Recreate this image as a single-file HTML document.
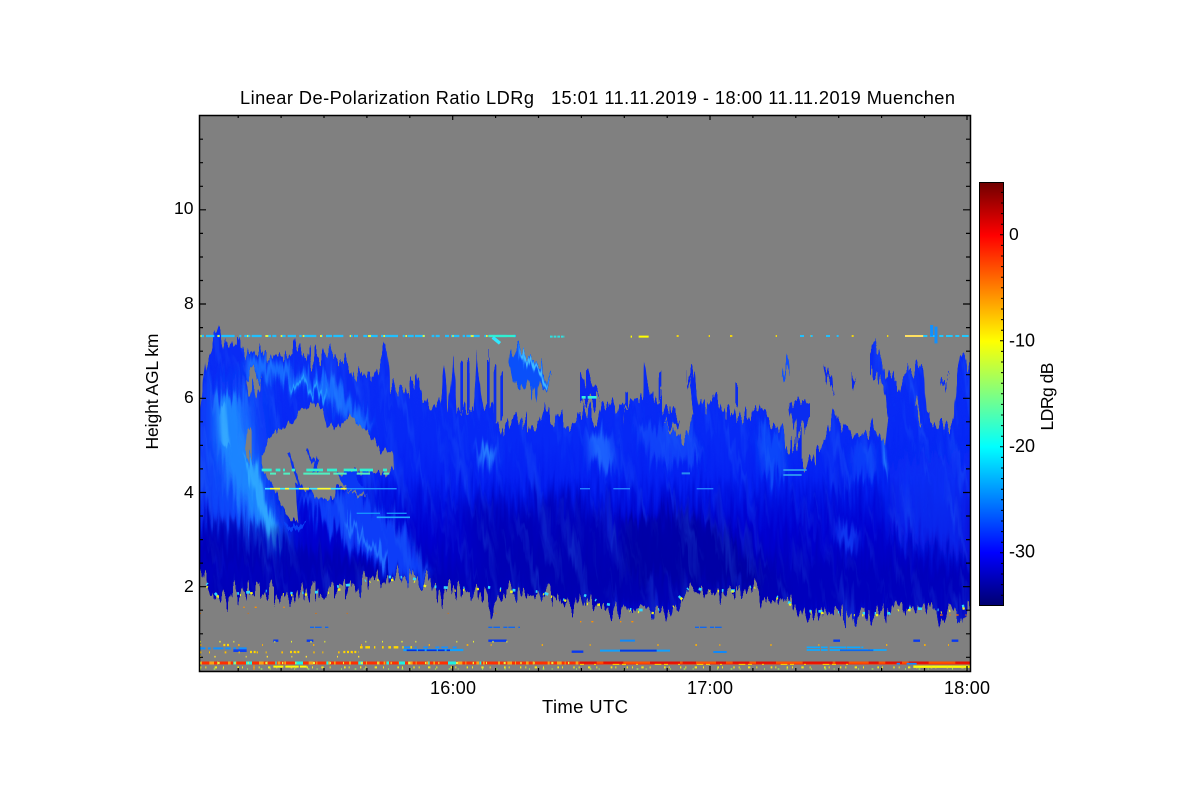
<!DOCTYPE html>
<html><head><meta charset="utf-8"><style>
html,body{margin:0;padding:0;background:#fff}
svg{display:block}
text{font-family:"Liberation Sans",sans-serif;font-size:17.5px;fill:#000}
</style></head><body>
<svg width="1200" height="800" viewBox="0 0 1200 800" xmlns="http://www.w3.org/2000/svg">
<defs>
<linearGradient id="cb" x1="0" y1="0" x2="0" y2="1">
<stop offset="0" stop-color="#700000"/><stop offset=".125" stop-color="#ff0000"/><stop offset=".25" stop-color="#ff8000"/><stop offset=".375" stop-color="#ffff00"/><stop offset=".5" stop-color="#80ff80"/><stop offset=".625" stop-color="#00ffff"/><stop offset=".75" stop-color="#0080ff"/><stop offset=".875" stop-color="#0000ff"/><stop offset="1" stop-color="#000070"/>
</linearGradient>
<linearGradient id="bg" gradientUnits="userSpaceOnUse" x1="0" y1="0" x2="0" y2="900">
<stop offset="0" stop-color="#0a2cf5"/><stop offset=".4" stop-color="#0628f5"/><stop offset=".52" stop-color="#0420f2"/><stop offset=".6" stop-color="#0010e0"/><stop offset=".7" stop-color="#0000d0"/><stop offset=".85" stop-color="#0000bc"/><stop offset=".93" stop-color="#0000b8"/><stop offset="1" stop-color="#0008d0"/>
</linearGradient>
<filter id="b1" x="-30%" y="-30%" width="160%" height="160%"><feGaussianBlur stdDeviation="12"/></filter>
<filter id="b2" x="-30%" y="-30%" width="160%" height="160%"><feGaussianBlur stdDeviation="30"/></filter>
<filter id="b3" x="-30%" y="-30%" width="160%" height="160%"><feGaussianBlur stdDeviation="4"/></filter>
<filter id="n" x="0" y="0" width="100%" height="100%"><feTurbulence type="fractalNoise" baseFrequency=".09 .012" numOctaves="3" seed="7"/><feColorMatrix type="matrix" values="0 0 0 0 0.05  0 0 0 0 0.38  0 0 0 0 1  2.6 0 0 0 -1.3"/></filter>
<filter id="jag" filterUnits="userSpaceOnUse" x="199" y="300" width="772" height="340" color-interpolation-filters="sRGB">
<feTurbulence type="fractalNoise" baseFrequency=".27 .025" numOctaves="2" seed="11"/>
<feColorMatrix type="matrix" values="1 0 0 0 0  0 0 0 0 .5  0 0 0 0 .5  0 0 0 0 1" result="t"/>
<feDisplacementMap in="SourceGraphic" in2="t" scale="44" xChannelSelector="G" yChannelSelector="R"/>
</filter>
<filter id="jag2" filterUnits="userSpaceOnUse" x="199" y="300" width="772" height="340" color-interpolation-filters="sRGB">
<feTurbulence type="fractalNoise" baseFrequency=".3 .03" numOctaves="2" seed="4"/>
<feColorMatrix type="matrix" values="1 0 0 0 0  0 0 0 0 .5  0 0 0 0 .5  0 0 0 0 1" result="t"/>
<feDisplacementMap in="SourceGraphic" in2="t" scale="16" xChannelSelector="G" yChannelSelector="R"/>
</filter>
<clipPath id="cl"><path transform="translate(190 320) scale(.33333)" d="M30 260 40 170 45 110 50 170 60 110 70 70 90 30 100 70 120 55 150 60 170 100 205 95 240 110 265 100 300 110 330 75 350 120 380 110 405 95 440 110 470 130 490 160 510 130 530 190 550 180 590 60 600 190 640 205 680 195 700 230 720 275 750 260 762 140 772 260 790 110 800 270 850 280 860 110 880 270 905 250 925 320 940 340 960 310 1000 310 1030 300 1060 260 1080 300 1110 290 1140 310 1170 265 1190 270 1220 300 1235 250 1270 255 1310 260 1300 300 1330 240 1360 220 1362 130 1372 200 1410 260 1440 250 1470 290 1465 310 1420 320 1460 340 1490 360 1510 300 1500 200 1515 140 1525 260 1550 250 1575 230 1600 290 1630 250 1640 300 1680 300 1700 270 1740 310 1770 310 1790 380 1820 360 1835 350 1835 430 1870 410 1910 350 1930 285 1960 310 1980 350 2020 340 2050 310 2085 380 2095 290 2080 180 2040 150 2040 100 2070 100 2085 150 2130 190 2140 150 2170 150 2200 140 2210 280 2260 320 2290 310 2300 180 2310 100 2340 130 2340 868 2310 880 2250 882 2220 862 2180 872 2130 870 2115 840 2100 890 2060 880 2000 892 1960 880 1920 882 1850 880 1820 860 1790 835 1770 842 1720 850 1700 800 1640 820 1540 815 1500 790 1470 850 1460 875 1450 860 1440 905 1420 870 1400 890 1370 870 1330 880 1280 880 1240 860 1200 850 1170 830 1160 858 1140 862 1095 830 1050 830 1030 815 1000 825 960 820 930 830 905 865 880 820 800 815 745 832 730 830 710 790 660 770 550 770 510 810 440 810 410 835 385 820 350 815 310 835 275 830 215 820 170 815 130 825 85 830 70 840 50 780 30 745Z"/></clipPath>
</defs>
<rect width="1200" height="800" fill="#fff"/>
<rect x="199" y="115" width="771" height="556" fill="#808080"/>
<g filter="url(#jag)">
<g clip-path="url(#cl)">
<g transform="translate(190 320) scale(.33333)">
<rect x="0" y="0" width="2340" height="900" fill="url(#bg)"/>
<path d="M30 200 210 180 250 480 300 700 30 590Z" fill="#0a46fa" filter="url(#b2)"/>
<path d="M70 230 170 230 200 420 280 680 180 600 100 480 70 350Z" fill="#1a70ff" opacity=".85" filter="url(#b1)"/>
<path d="M80 230 135 230 175 400 255 620 275 690 220 620 140 500 90 400Z" fill="#1a88ff" opacity=".9" filter="url(#b1)"/>
<path d="M160 420 190 420 250 600 275 690 235 640Z" fill="#30b0ff" opacity=".8" filter="url(#b3)"/>
<path d="M90 260 105 260 120 380 95 380Z" fill="#40b8ff" opacity=".7" filter="url(#b3)"/>
<path d="M170 130 300 170 420 210 530 330" fill="none" stroke="#156cff" stroke-width="50" filter="url(#b1)"/>
<path d="M300 180 360 200 410 230" fill="none" stroke="#25a0ff" stroke-width="14" filter="url(#b3)"/>
<path d="M310 540 500 510 650 640 725 785 620 770 450 640Z" fill="#0a3cf8" filter="url(#b1)"/>
<path d="M470 600 560 690 590 730" fill="none" stroke="#2070ff" stroke-width="16" filter="url(#b3)"/>
<path d="M860 380 920 390 910 440 870 430Z" fill="#2880ff" filter="url(#b1)"/>
<path d="M1190 330 1260 350 1280 450 1200 440Z" fill="#2070ff" opacity=".8" filter="url(#b1)"/>
<path d="M1330 300 1500 330 1540 430 1380 420Z" fill="#1450fa" opacity=".7" filter="url(#b1)"/>
<path d="M1700 340 1780 340 1790 470 1720 470Z" fill="#1050fa" opacity=".8" filter="url(#b1)"/>
<path d="M1950 600 2010 640 1990 700 1930 640Z" fill="#1850ff" opacity=".7" filter="url(#b1)"/>
<path d="M2075 340 2090 420 2095 470 2080 430Z" fill="#2a90ff" filter="url(#b3)"/>
<path d="M1980 380 2060 380 2060 470 1990 480Z" fill="#1048fa" opacity=".7" filter="url(#b1)"/>
<path d="M2100 420 2340 400 2340 720 2100 640Z" fill="#0a30f5" opacity=".75" filter="url(#b2)"/>
<path d="M30 600 200 610 350 680 560 745 700 790 30 720Z" fill="#0000a8" opacity=".5" filter="url(#b1)"/>
<path d="M800 560 1170 540 1300 600 1500 560 1620 620 1800 790 1700 830 1170 830 900 760Z" fill="#0000a8" opacity=".55" filter="url(#b2)"/>
<path d="M1300 600 1500 580 1640 680 1720 790 1300 760Z" fill="#00009c" opacity=".55" filter="url(#b1)"/>
<path d="M1800 740 2340 800 2340 860 1800 870Z" fill="#0000c0" opacity=".6" filter="url(#b1)"/>
</g>
<rect x="-20" y="320" width="1050" height="320" transform="skewX(14) translate(-90 0)" filter="url(#n)" opacity=".22"/>
</g>
<g transform="translate(190 320) scale(.33333)">
<path fill="#808080" d="M168 165 190 155 215 180 200 225 175 215Z"/>
<path fill="#808080" d="M2180 240 2195 280 2185 290 2175 260Z"/>
<path fill="#808080" d="M170 340 185 340 185 420 165 390Z"/>
<path fill="#0a50fa" d="M960 90 1000 95 1040 130 1085 165 1075 190 1050 190 1040 245 1020 205 970 180 955 120Z"/>
<path d="M990 100 1040 150 1075 175" fill="none" stroke="#45c0ff" stroke-width="16" filter="url(#b3)"/>
<path fill="#0a28f0" d="M1170 170 1190 160 1230 240 1170 240Z"/>
<path fill="#0a2cf0" d="M1795 250 1830 240 1860 260 1860 310 1820 340 1800 290Z"/>
<path fill="#0a28f0" d="M1900 130 1925 175 1935 210 1905 170ZM1985 175 2000 195 1985 205ZM1490 160 1515 140 1520 190 1495 180Z"/>
<path fill="#1050ff" d="M1785 130 1795 115 1800 150 1775 165Z"/>
<path fill="#0a30f5" d="M2250 190 2280 180 2255 215Z"/>
<path d="M815 270V130M835 270V140M895 260V120M915 290V140M935 300V170M1640 250V200M1410 250V180M1310 270V190" stroke="#0a2cf0" stroke-width="8"/>
</g>
</g>
<g filter="url(#jag2)">
<g transform="translate(190 320) scale(.33333)">
<path fill="#808080" d="M215 410 230 375 250 340 300 310 330 280 370 245 400 270 410 320 450 320 480 290 520 320 570 390 610 400 612 440 600 460 490 450 500 480 530 525 520 530 490 520 440 500 430 540 385 535 340 500 315 490 325 600 290 590 250 500 215 440Z"/>
<path d="M295 400 330 500M350 390 385 450M385 410 370 460" fill="none" stroke="#0a30f0" stroke-width="6"/>
<path fill="#0a38f5" d="M440 465 490 450 530 525 470 510Z"/>
<path fill="#0a40f5" d="M280 615 350 610 330 630 285 625Z"/>
</g>
</g>
<g transform="translate(190 320) scale(.33333)">
<path d="M50 790 80 825 130 822 215 812 310 820 410 815 440 800 510 790 550 770 660 772 710 790 730 800 800 805 880 800 960 810 1050 815 1140 845 1170 820 1240 850 1330 870 1400 870 1440 860 1500 800 1540 810 1640 812 1700 795M1760 830 1850 873 1920 875 2000 880 2100 880 2130 862 2250 870 2340 855" fill="none" stroke="#30d8ff" stroke-width="8" stroke-dasharray="4 34 9 61 5 22 12 47 3 71 7 29"/>
<path d="M50 800 85 830 130 828 215 815 310 826 410 820 440 810 510 800 550 780 660 780 710 800 730 815 800 812 880 806 960 815 1050 820 1155 850 1240 855 1330 875 1400 880 1440 870 1500 810 1540 812 1640 815 1700 802M1760 835 1850 877 1920 880 2000 886 2100 885 2130 868 2250 878 2340 862" fill="none" stroke="#f0f020" stroke-width="7" stroke-dasharray="4 37 7 63 3 28 8 91 3 22"/>
<path d="M30 48H980" fill="none" stroke="#20c0ff" stroke-width="7" stroke-dasharray="12 6 25 10 7 4 40 14 6 9 18 4 30 20 8 4 12 16"/>
<path d="M30 48H980" fill="none" stroke="#e0f040" stroke-width="6" stroke-dasharray="5 47 6 83 4 51 9 37 5 61"/>
<path d="M895 48H975" stroke="#30f0d0" stroke-width="7"/>
<path d="M908 52 930 70" stroke="#30e8ff" stroke-width="10"/>
<path d="M1080 50H1125" stroke="#30e0e0" stroke-width="6" stroke-dasharray="8 3"/>
<path d="M1322 50H1385" stroke="#ffff00" stroke-width="6" stroke-dasharray="4 20 30 300"/>
<path d="M1460 48H2340" stroke="#ffe000" stroke-width="5" stroke-dasharray="6 90 4 60 7 130 4 100 5 45 4 70 6 100 4 90"/>
<path d="M1830 48H1950" stroke="#20c0ff" stroke-width="6" stroke-dasharray="12 20 6 40"/>
<path d="M2145 48H2200" stroke="#ffe060" stroke-width="6"/>
<path d="M2200 48H2340" stroke="#20c8ff" stroke-width="6" stroke-dasharray="12 8 20 8"/>
<path d="M2225 15 2225 50M2238 70V20" stroke="#1090ff" stroke-width="9"/>
<path d="M215 450H605" stroke="#30f0d0" stroke-width="8" stroke-dasharray="30 12 14 8 6 20 10 34 50 12 30 20 40 8 40"/>
<path d="M240 461H600" stroke="#50f0c0" stroke-width="6" stroke-dasharray="18 22 20 40 80 10 40 30 40 40"/>
<path d="M225 506H470" stroke="#40e8ff" stroke-width="5"/>
<path d="M240 506H470" stroke="#ffff30" stroke-width="5" stroke-dasharray="30 15 12 30 30 25 40 30"/>
<path d="M470 506H620" stroke="#2090ff" stroke-width="4"/>
<path d="M1170 506H1580" stroke="#2280ff" stroke-width="4" stroke-dasharray="30 70 50 200 50 20"/>
<path d="M500 580H770" stroke="#1690ff" stroke-width="4" stroke-dasharray="70 20 60 130"/>
<path d="M560 592H660" stroke="#20a8ff" stroke-width="5"/>
<path d="M1475 460H1500M1780 450H1850M1780 465H1835" stroke="#30a0f0" stroke-width="6" opacity=".85"/>
<path d="M1175 232H1220" stroke="#30f0e0" stroke-width="8" stroke-dasharray="12 6 30 2"/>
<path d="M2250 885H2340" stroke="#ff7000" stroke-width="4" stroke-dasharray="8 20 4 16"/>
<path d="M160 862H300M1170 905H1340" stroke="#ff9000" stroke-width="4" stroke-dasharray="4 30 6 80"/>
<path d="M30 985H170" stroke="#1090ff" stroke-width="6" stroke-dasharray="16 8 8 8 30 6"/>
<path d="M130 992H170" stroke="#1040f0" stroke-width="8"/>
<path d="M640 990H820" stroke="#10a0ff" stroke-width="7"/>
<path d="M650 991H780" stroke="#0030e0" stroke-width="5" stroke-dasharray="30 4 20 6"/>
<path d="M640 982H800" stroke="#1890ff" stroke-width="5" stroke-dasharray="22 12 6 20 14"/>
<path d="M1230 992H1440" stroke="#10a0ff" stroke-width="6"/>
<path d="M1290 992H1400" stroke="#0038e8" stroke-width="6"/>
<path d="M1290 962H1335M1570 996H1610" stroke="#1088f8" stroke-width="6"/>
<path d="M1850 990H2090M1850 982H2020" stroke="#10a8ff" stroke-width="5" stroke-dasharray="40 3 20 6 50 2"/>
<path d="M1950 991H2050" stroke="#0868f0" stroke-width="5"/>
<path d="M2170 962H2190M2285 962H2305M1930 962H1950M250 962H265M350 962H370M895 962H950M1145 995H1180" stroke="#0838f0" stroke-width="7"/>
<path d="M360 922H415M895 922H990M1515 922H1600" stroke="#1068f0" stroke-width="4" stroke-dasharray="12 3 20 10"/>
<path d="M510 982H680" stroke="#ffd800" stroke-width="7" stroke-dasharray="8 8 14 12 4 20 5 14"/>
<path d="M100 975 120 975M180 996H200M300 996H330M460 996H505" stroke="#ffd800" stroke-width="7" stroke-dasharray="6 5"/>
<path d="M30 1010H540" stroke="#ffe030" stroke-width="5" stroke-dasharray="3 40 4 90 3 60 4 70"/>
<path d="M30 965H1000" stroke="#e8f030" stroke-width="5" stroke-dasharray="3 55 4 38 3 120 3 47"/>
<path d="M30 997H500" stroke="#ffc000" stroke-width="6" stroke-dasharray="4 23 3 44 5 37 3 51"/>
<path d="M30 975H2340" stroke="#ffb000" stroke-width="5" stroke-dasharray="4 110 5 67 3 150 4 140 3 200"/>
<path d="M30 880H1100" stroke="#e07000" stroke-width="3" stroke-dasharray="3 140 3 200 4 90 3 300"/>
<path d="M30 1029H2340" stroke="#ff3000" stroke-width="9"/>
<path d="M30 1029H1170" stroke="#ffa010" stroke-width="9" stroke-dasharray="6 22 14 9 3 30 8 12 5 40"/>
<path d="M130 1029H900" stroke="#20f0e0" stroke-width="9" stroke-dasharray="8 30 18 70 4 55 24 70 6 90 14 70"/>
<path d="M30 1029H1170" stroke="#e8f040" stroke-width="7" stroke-dasharray="3 50 6 44 4 36"/>
<path d="M1170 1028H2340" stroke="#ff5000" stroke-width="6"/>
<path d="M1170 1028H2340" stroke="#e81000" stroke-width="7" stroke-dasharray="50 20 60 80 90 8 40 60 30 20"/>
<path d="M2120 1031H2130M2150 1031H2180" stroke="#1088ff" stroke-width="5"/>
<path d="M1170 1033H2000" stroke="#ffd000" stroke-width="3" stroke-dasharray="12 30 6 50 20 8"/>
<path d="M250 1040H350" stroke="#ffff00" stroke-width="6" stroke-dasharray="30 6 40 4"/>
<path d="M2170 1040H2340" stroke="#ffff00" stroke-width="7"/>
<path d="M30 1042H2340" stroke="#f0e820" stroke-width="6" stroke-dasharray="4 12 3 25 7 18 3 40 5 9 3 31"/>
<path d="M30 1047H2340" stroke="#a0f050" stroke-width="4" stroke-dasharray="3 38 5 22 3 70"/>
<path d="M192 1035V1050" stroke="#ff9000" stroke-width="3"/>
</g>
<rect x="199.5" y="115.5" width="771" height="556" fill="none" stroke="#000" stroke-width="1.5"/>
<path fill="none" stroke="#000" stroke-width="1.2" d="M199 586.7h7M199 492.5h7M199 398.3h7M199 304h7M199 209.8h7M199 657.3h4M199 633.8h4M199 610.2h4M199 563.1h4M199 539.6h4M199 516h4M199 468.9h4M199 445.4h4M199 421.8h4M199 374.7h4M199 351.2h4M199 327.6h4M199 280.5h4M199 257h4M199 233.4h4M199 186.3h4M199 162.7h4M199 139.2h4M970 586.7h-7M970 492.5h-7M970 398.3h-7M970 304h-7M970 209.8h-7M970 657.3h-4M970 633.8h-4M970 610.2h-4M970 563.1h-4M970 539.6h-4M970 516h-4M970 468.9h-4M970 445.4h-4M970 421.8h-4M970 374.7h-4M970 351.2h-4M970 327.6h-4M970 280.5h-4M970 257h-4M970 233.4h-4M970 186.3h-4M970 162.7h-4M970 139.2h-4"/>
<path fill="none" stroke="#000" stroke-width="1.2" d="M238.2 671v-3M281.1 671v-3M324 671v-3M366.9 671v-3M409.8 671v-3M452.7 671v-5M495.6 671v-3M538.5 671v-3M581.4 671v-3M624.3 671v-3M667.2 671v-3M710 671v-5M752.9 671v-3M795.8 671v-3M838.7 671v-3M881.6 671v-3M924.5 671v-3M967 671v-5M238.2 115v3M281.1 115v3M324 115v3M366.9 115v3M409.8 115v3M452.7 115v5M495.6 115v3M538.5 115v3M581.4 115v3M624.3 115v3M667.2 115v3M710 115v5M752.9 115v3M795.8 115v3M838.7 115v3M881.6 115v3M924.5 115v3M967 115v5"/>
<rect x="979.5" y="182.5" width="24" height="423" fill="url(#cb)" stroke="#000" stroke-width="1"/>
<path fill="none" stroke="#000" stroke-width="1" d="M1003 192.4h-2M1003 203h-2M1003 213.6h-2M1003 224.2h-2M1003 234.8h-3M1003 245.4h-2M1003 256h-2M1003 266.6h-2M1003 277.2h-2M1003 287.8h-2M1003 298.4h-2M1003 309h-2M1003 319.6h-2M1003 330.2h-2M1003 340.8h-3M1003 351.4h-2M1003 362h-2M1003 372.6h-2M1003 383.2h-2M1003 393.8h-2M1003 404.4h-2M1003 415h-2M1003 425.6h-2M1003 436.2h-2M1003 446.8h-3M1003 457.4h-2M1003 468h-2M1003 478.6h-2M1003 489.2h-2M1003 499.8h-2M1003 510.4h-2M1003 521h-2M1003 531.6h-2M1003 542.2h-2M1003 552.8h-3M1003 563.4h-2M1003 574h-2M1003 584.6h-2M1003 595.2h-2"/>
<text x="240" y="104" textLength="715" xml:space="preserve" style="font-size:18.2px">Linear De-Polarization Ratio LDRg   15:01 11.11.2019 - 18:00 11.11.2019 Muenchen</text>
<text x="174" y="214">10</text>
<text x="184" y="309">8</text>
<text x="184" y="403">6</text>
<text x="184" y="498">4</text>
<text x="184" y="592">2</text>
<text x="430" y="694" textLength="46" style="font-size:18px">16:00</text>
<text x="687" y="694" textLength="46" style="font-size:18px">17:00</text>
<text x="944" y="694" textLength="46" style="font-size:18px">18:00</text>
<text x="542" y="713" textLength="86" style="font-size:18.5px">Time UTC</text>
<text transform="translate(158 449.5) rotate(-90)" textLength="116">Height AGL km</text>
<text x="1009" y="240">0</text>
<text x="1009" y="346.5" textLength="26" style="font-size:18px">-10</text>
<text x="1009" y="452" textLength="26" style="font-size:18px">-20</text>
<text x="1009" y="557.5" textLength="26" style="font-size:18px">-30</text>
<text transform="translate(1053 430.5) rotate(-90)" textLength="68">LDRg dB</text>
</svg>
</body></html>
